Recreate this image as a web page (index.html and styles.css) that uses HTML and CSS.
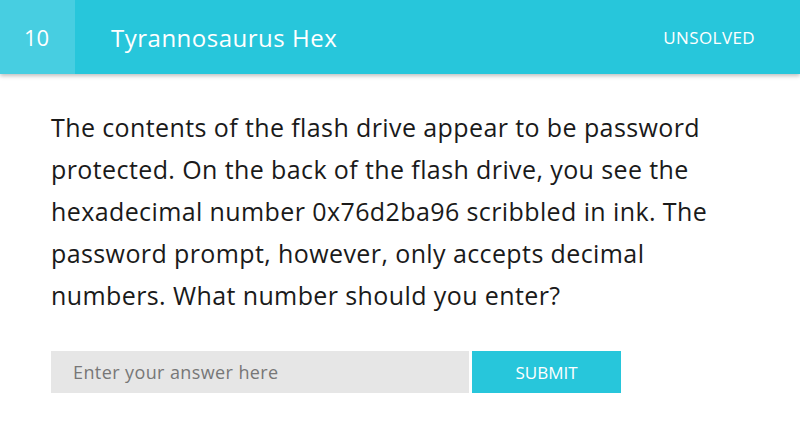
FILE: index.html
```html
<!DOCTYPE html>
<html>
<head>
<meta charset="utf-8">
<link rel="stylesheet" href="styles.css">
</head>
<body>
<header class="bar">
  <div class="num">10</div>
  <div class="title">Tyrannosaurus Hex</div>
  <div class="status">UNSOLVED</div>
</header>
<main class="content">
  <p class="question">The contents of the flash drive appear to be password protected. On the back of the flash drive, you see the hexadecimal number 0x76d2ba96 scribbled in ink. The password prompt, however, only accepts decimal numbers. What number should you enter?</p>
  <form class="answer">
    <input class="field" type="text" placeholder="Enter your answer here">
    <button class="submit" type="button">SUBMIT</button>
  </form>
</main>
</body>
</html>
```
FILE: styles.css
```css
html, body {
  margin: 0;
  padding: 0;
  background: #ffffff;
  font-family: "Open Sans", "DejaVu Sans", sans-serif;
}
.bar {
  display: flex;
  align-items: center;
  height: 74px;
  background: #27c6db;
  color: #ffffff;
  box-shadow: 0 2px 4px rgba(0,0,0,0.25);
  position: relative;
  z-index: 1;
}
.num {
  width: 75px;
  height: 100%;
  display: flex;
  align-items: center;
  justify-content: center;
  background: #47cee1;
  font-size: 22px;
  padding-right: 2px;
  box-sizing: border-box;
}
.title {
  margin-left: 36px;
  font-size: 24px;
  letter-spacing: 0.5px;
  flex: 1;
}
.status {
  font-size: 17px;
  letter-spacing: 0.4px;
  margin-right: 45px;
}
.content {
  padding: 32px 51px 0;
}
.question {
  margin: 0;
  width: 662px;
  font-size: 25px;
  letter-spacing: 0.4px;
  line-height: 42px;
  color: #1a1a1a;
}
.answer {
  display: flex;
  gap: 3px;
  margin-top: 35px;
}
.field {
  width: 418px;
  height: 42px;
  box-sizing: border-box;
  border: none;
  background: #e6e6e6;
  padding: 0 22px;
  font-family: inherit;
  font-size: 18px;
  letter-spacing: 0.4px;
  outline: none;
}
.field::placeholder {
  color: #777777;
}
.submit {
  width: 149px;
  height: 42px;
  border: none;
  background: #27c6db;
  color: #ffffff;
  font-family: inherit;
  font-size: 17px;
}
```
